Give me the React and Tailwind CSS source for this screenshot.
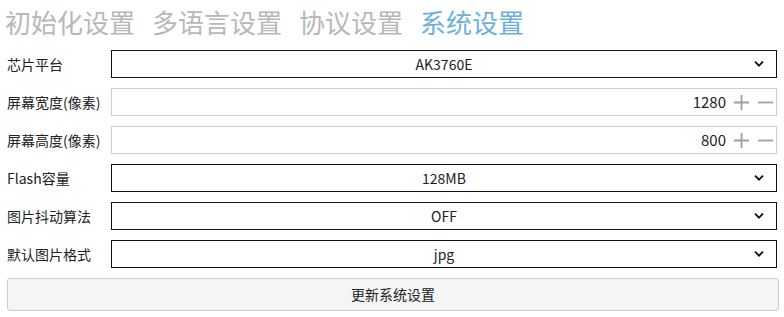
import React from "react";

const font = { fontFamily: '"Noto Sans CJK SC", "Noto Sans", sans-serif' };

function Chevron() {
  return (
    <svg width="10" height="7" viewBox="0 0 10 7" className="absolute right-[12px] top-1/2 -translate-y-1/2">
      <path d="M1 1.2 L5 5.2 L9 1.2" fill="none" stroke="#111" strokeWidth="1.8" />
    </svg>
  );
}

function SelectRow({ label, value }) {
  return (
    <div className="flex items-center h-[28px]">
      <div className="w-[104px] text-[14px] text-[#222] leading-none">{label}</div>
      <div className="relative flex-1 mr-[2px] h-[28px] border-[1.5px] border-[#111] bg-white flex items-center justify-center text-[14px] text-[#222]">
        {value}
        <Chevron />
      </div>
    </div>
  );
}

function NumberRow({ label, value }) {
  return (
    <div className="flex items-center h-[28px]">
      <div className="w-[104px] text-[14px] text-[#222] leading-none">{label}</div>
      <div className="flex-1 mr-[2px] h-[28px] border border-[#cfcfcf] bg-white flex items-center justify-end pr-[2px] text-[15px] text-[#222]">
        <span className="mr-[7px]">{value}</span>
        <svg width="17" height="17" viewBox="0 0 17 17" className="mr-[7px]">
          <path d="M8.5 1 V16 M1 8.5 H16" stroke="#a0a0a0" strokeWidth="1.8" />
        </svg>
        <svg width="17" height="17" viewBox="0 0 17 17">
          <path d="M1 8.5 H16" stroke="#a0a0a0" strokeWidth="1.8" />
        </svg>
      </div>
    </div>
  );
}

export default function App() {
  return (
    <div className="w-[784px] h-[317px] bg-white overflow-hidden" style={font}>
      <div className="h-[50px] pl-[5px] pt-[6px] flex gap-[17px] text-[26px] leading-[32px] text-[#b8b8b8]">
        <span>初始化设置</span>
        <span>多语言设置</span>
        <span>协议设置</span>
        <span className="text-[#6eb0da]">系统设置</span>
      </div>
      <div className="pl-[7px] pr-[5px] flex flex-col gap-[10px]">
        <SelectRow label="芯片平台" value="AK3760E" />
        <NumberRow label="屏幕宽度(像素)" value="1280" />
        <NumberRow label="屏幕高度(像素)" value="800" />
        <SelectRow label="Flash容量" value="128MB" />
        <SelectRow label="图片抖动算法" value="OFF" />
        <SelectRow label="默认图片格式" value="jpg" />
        <button className="h-[33px] w-full -mr-[2px] border border-[#cccccc] rounded-[3px] bg-[#f5f5f5] text-[14px] text-[#222] flex items-center justify-center">
          更新系统设置
        </button>
      </div>
    </div>
  );
}
